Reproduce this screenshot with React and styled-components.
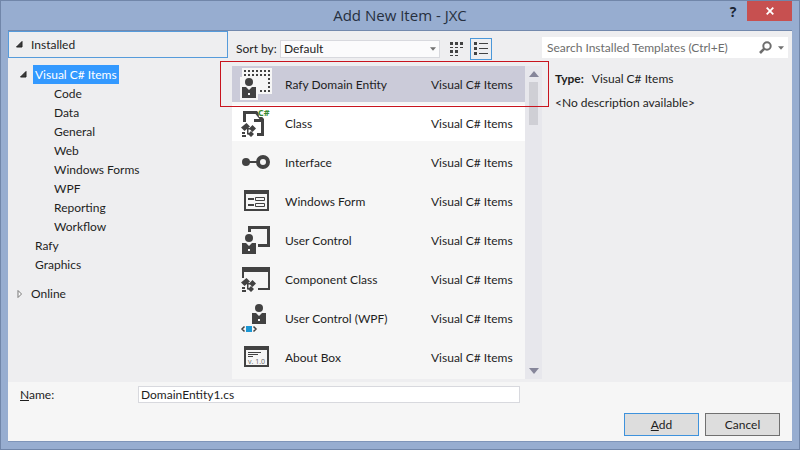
import React, { useState } from "react";
import styled, { createGlobalStyle } from "styled-components";

const INK = "#424242";

const GlobalStyle = createGlobalStyle`
  *, *::before, *::after { box-sizing: border-box; }
  body { margin: 0; }
  body, button, input, select {
    font-family: "Lato", "Open Sans", sans-serif;
    font-size: 12px;
    line-height: 19px;
    color: #1e1e1e;
  }
  ul { list-style: none; margin: 0; padding: 0; }
  svg { display: block; flex: none; }
`;

const Window = styled.div`
  display: flex;
  flex-direction: column;
  min-height: 100vh;
  padding: 0 7px 7px;
  background: #97add0;
  border: 1px solid #7186a9;
`;

const TitleBar = styled.header`
  display: grid;
  grid-template-columns: 80px 1fr 80px;
  align-items: start;
  height: 29px;
`;

const Title = styled.h1`
  grid-column: 2;
  margin: 0;
  font-family: "Open Sans", sans-serif;
  font-size: 15px;
  font-weight: 400;
  line-height: 29px;
  text-align: center;
  color: #26303f;
`;

const CaptionButtons = styled.div`
  display: flex;
  justify-content: flex-end;
`;

const CaptionButton = styled.button`
  display: grid;
  place-items: center;
  width: ${(p) => (p.$close ? 45 : 28)}px;
  height: 20px;
  padding: 0;
  border: 0;
  background: ${(p) => (p.$close ? "#c75050" : "transparent")};
  color: ${(p) => (p.$close ? "#fff" : "#1b2433")};
  font-family: "Open Sans", sans-serif;
  font-size: 14px;
  font-weight: 700;
`;

const Client = styled.main`
  display: flex;
  flex: 1;
  flex-direction: column;
  border-top: 1px solid #7389ad;
  border-bottom: 1px solid #7f95b9;
  background: #f6f6f6;
`;

const Browser = styled.div`
  display: grid;
  grid-template-columns: 220px minmax(0, 1fr) 250px;
  padding-bottom: 3px;
  background: #eeeef0;
`;

const Nav = styled.nav`
  display: flex;
  flex-direction: column;
`;

const NavHeader = styled.button`
  display: flex;
  align-items: center;
  gap: 8px;
  height: 27px;
  padding: 0 7px;
  border: 1px solid ${(p) => (p.$active ? "#569bdb" : "transparent")};
  background: transparent;
  text-align: left;
`;

const Tree = styled.ul`
  padding: 7px 0 6px 12px;
`;

const TreeRow = styled.li`
  display: flex;
  align-items: center;
  gap: 6px;
  height: 19px;
  padding-left: ${(p) => p.$indent}px;
`;

const TreeLabel = styled.button`
  height: 19px;
  padding: 0 2px;
  border: 0;
  background: ${(p) => (p.$selected ? "#3399ff" : "transparent")};
  color: ${(p) => (p.$selected ? "#fff" : "#1e1e1e")};
`;

const Templates = styled.section`
  padding-left: 4px;
`;

const SortBar = styled.div`
  display: flex;
  align-items: center;
  height: 35px;
  padding-left: 4px;
`;

const SortLabel = styled.label`
  width: 44px;
  white-space: nowrap;
`;

const SelectBox = styled.div`
  display: grid;
  align-items: center;
  width: 160px;
  margin-right: 6px;

  > * { grid-area: 1 / 1; }
  > svg { justify-self: end; margin-right: 4px; pointer-events: none; }
`;

const SortSelect = styled.select`
  appearance: none;
  width: 100%;
  height: 18px;
  padding: 0 3px;
  border: 1px solid #d8d9de;
  border-radius: 0;
  background: #fbfbfc;
  line-height: 16px;
`;

const ViewButton = styled.button`
  display: grid;
  place-items: center;
  width: 22px;
  height: 22px;
  margin-right: 2px;
  padding: 0;
  border: 1px solid ${(p) => (p.$active ? "#4a97d9" : "transparent")};
  background: transparent;
`;

const ListFrame = styled.div`
  position: relative;
  display: grid;
  grid-template-columns: minmax(0, 1fr) 17px;
`;

const Highlight = styled.div`
  position: absolute;
  top: -5px;
  right: -7px;
  left: -12px;
  height: 46px;
  border: 1px solid #c8141e;
  pointer-events: none;
`;

const TemplateList = styled.ul`
  display: grid;
  gap: 3px;
  padding-bottom: 4px;
  background: #f6f6f6;
`;

const TemplateButton = styled.button`
  display: flex;
  align-items: center;
  width: 100%;
  height: 36px;
  padding: 0 12px 0 8px;
  border: 0;
  text-align: left;
  background: ${(p) => (p.$selected ? "#cbcbd9" : p.$hovered ? "#fff" : "transparent")};
`;

const TemplateName = styled.span`
  flex: 1;
  padding-left: 13px;
`;

const TemplateKind = styled.span`
  width: 82px;
  white-space: nowrap;
`;

const ScrollBar = styled.div`
  display: flex;
  flex-direction: column;
  align-items: center;
  background: #e7e7ec;
`;

const ScrollButton = styled.button`
  display: grid;
  place-items: center;
  width: 17px;
  height: 16px;
  padding: 0;
  border: 0;
  background: transparent;
`;

const ScrollTrack = styled.div`
  flex: 1;
`;

const ScrollThumb = styled.div`
  width: 9px;
  height: 43px;
  background: #cfcfd5;
`;

const Details = styled.aside`
  padding: 6px 4px 0 0;
`;

const SearchBox = styled.div`
  display: flex;
  align-items: center;
  gap: 6px;
  height: 21px;
  padding: 0 4px 0 5px;
  background: #fff;
`;

const SearchInput = styled.input`
  flex: 1;
  min-width: 0;
  padding: 0;
  border: 0;
  outline: 0;
  background: transparent;

  &::placeholder { color: #6d6d6d; opacity: 1; }
`;

const Description = styled.div`
  display: grid;
  gap: 5px;
  padding: 11px 0 0 13px;
`;

const TypeLine = styled.div`
  display: flex;
  gap: 8px;
`;

const Footer = styled.form`
  display: flex;
  flex-direction: column;
  flex: 1;
  justify-content: space-between;
  padding: 3px 12px 5px;
`;

const NameRow = styled.div`
  display: flex;
  align-items: center;
`;

const NameLabel = styled.label`
  width: 118px;
`;

const NameInput = styled.input`
  flex: 0 1 382px;
  height: 17px;
  min-width: 0;
  padding: 0 2px;
  border: 1px solid #d8d9de;
  background: #fff;
`;

const Actions = styled.div`
  display: flex;
  justify-content: flex-end;
  gap: 6px;
`;

const ActionButton = styled.button`
  width: 75px;
  height: 23px;
  padding: 0;
  border: 1px solid ${(p) => (p.$primary ? "#3e92dc" : "#707070")};
  background: #dddddd;
`;

const Expanded = () => (
  <svg width="7" height="7" viewBox="0 0 7 7"><path d="M6 0.5V6H0.5z" fill="#3c3c3c" stroke="#222" /></svg>
);
const Collapsed = () => (
  <svg width="7" height="10" viewBox="0 0 7 10"><path d="M2 1.500v7L5.500 5z" fill="#fff" stroke="#777" /></svg>
);
const Down = ({ color = "#717171", size = 5 }) => (
  <svg width={size} height={size} viewBox="0 0 10 10"><path d="M0 2h10L5 8z" fill={color} /></svg>
);
const Up = () => (
  <svg width="10" height="10" viewBox="0 0 10 10"><path d="M0 8h10L5 2z" fill="#86869a" /></svg>
);
const Cross = () => (
  <svg width="8" height="8" viewBox="0 0 8 8"><path d="M0.7 0.7l6.6 6.6M7.3 0.7L0.7 7.3" stroke="#fff" strokeWidth="1.8" /></svg>
);
const Magnifier = () => (
  <svg width="13" height="13" viewBox="0 0 13 13" fill="none" stroke="#6d6d6d">
    <circle cx="8" cy="5" r="3.7" strokeWidth="2" />
    <path d="M5.3 7.7L1 12" strokeWidth="2.6" />
  </svg>
);
const SmallIcons = () => (
  <svg width="14" height="14" viewBox="0 0 14 14" fill={INK}>
    {[0, 5, 10].map((x) => <rect key={x} x={x} y="0" width="3" height="3" />)}
    {[0, 5, 10].map((x) => <rect key={x} x={x} y="5" width="3" height="1" />)}
    {[0, 5].map((x) => <rect key={x} x={x} y="8" width="3" height="3" />)}
    {[0, 5].map((x) => <rect key={x} x={x} y="13" width="3" height="1" />)}
  </svg>
);
const MediumIcons = () => (
  <svg width="14" height="14" viewBox="0 0 14 14" fill={INK}>
    {[0, 5, 10].map((y) => (
      <g key={y}><rect x="0" y={y} width="3" height="3" /><rect x="5" y={y + 1} width="9" height="1" /></g>
    ))}
  </svg>
);

const Person = ({ x = 0, y = 0, hole = "#f6f6f6" }) => (
  <g transform={`translate(${x} ${y})`}>
    <circle cx="7" cy="4" r="4" fill={INK} />
    <path d="M0 9h4l3 3 3-3h4v11H0z" fill={INK} />
    <rect x="6" y="15" width="2" height="2" fill={hole} />
  </g>
);
const Parts = ({ y = 0 }) => (
  <g transform={`translate(0 ${y})`} fill={INK}>
    <path d="M1 4.500L6.500 0l3.500 3.500L4.500 8z" />
    <path d="M9 5.500L12.500 2 16 5.500 12.500 9zM8 11l3-3 3 3-3 3z" />
    <path d="M7 5h3v1.500H8.500V10H10v1.500H7zM2 9h3v2H2zM2 12h4v2H2z" />
  </g>
);

const dots = [];
for (let x = 4; x <= 28; x += 4) dots.push([x, 2], [x, 6]);
for (let y = 10; y <= 18; y += 4) dots.push([28, y]);
for (let x = 20; x <= 28; x += 4) dots.push([x, 22]);

const glyphs = {
  entity: (
    <>
      <path d="M2 0h30v26H18v6H0V9h2z" fill="#f6f6f6" />
      {dots.map(([x, y]) => <rect key={`${x}-${y}`} x={x} y={y} width="2" height="2" fill={INK} />)}
      <Person x={2} y={10} />
    </>
  ),
  class: (
    <>
      <path d="M3 15V4h14l7 8v17h-7v-3h4V15h-7V7H6v8z" fill={INK} />
      <path d="M14 7h1.500l4 5H14z" fill="#fff" />
      <Parts y={16} />
      <path d="M18 1h13v9H19z" fill="#fff" />
      <text x="18" y="9" fontFamily="Open Sans, sans-serif" fontSize="9" fontWeight="700" fill="#388a34">C#</text>
    </>
  ),
  interface: (
    <>
      <circle cx="6" cy="16" r="4" fill={INK} />
      <path d="M6 16h11" stroke={INK} strokeWidth="2" />
      <circle cx="23" cy="16" r="5" fill="none" stroke={INK} strokeWidth="4" />
    </>
  ),
  form: (
    <>
      <path d="M4 5h25v21H4z M6 9v15h21V9z" fill={INK} fillRule="evenodd" />
      <path d="M8 13h6v2H8zM8 19h6v2H8z" fill={INK} />
      <path d="M15.500 12.500h9v3h-9zM15.500 18.500h9v3h-9z" fill="none" stroke={INK} />
    </>
  ),
  control: (
    <>
      <path d="M9.500 8V3.500h19v18H18" fill="none" stroke={INK} strokeWidth="3" />
      <Person x={2} y={10} />
    </>
  ),
  component: (
    <>
      <path d="M2 4h28v23H18v-2h10V9H4v6H2z" fill={INK} />
      <Parts y={15} />
    </>
  ),
  wpf: (
    <>
      <Person x={12} y={2} />
      <rect x="6" y="24" width="6" height="6" fill="#1c97d4" />
      <path d="M4.500 24.500L2 27l2.500 2.500M13.500 24.500L16 27l-2.500 2.500" fill="none" stroke={INK} strokeWidth="1.5" />
    </>
  ),
  about: (
    <>
      <path d="M4 5h25v21H4z M6 9v15h21V9z" fill={INK} fillRule="evenodd" />
      <path d="M8 11.500h13M8 13.500h10M8 15.500h5" stroke={INK} />
      <text x="8" y="23" fontFamily="Open Sans, sans-serif" fontSize="7" fill="#666">v. 1.0</text>
    </>
  ),
};

const TemplateIcon = ({ name }) => (
  <svg width="32" height="32" viewBox="0 0 32 32" aria-hidden="true">{glyphs[name]}</svg>
);

const categories = ["Code", "Data", "General", "Web", "Windows Forms", "WPF", "Reporting", "Workflow"];
const templates = [
  ["entity", "Rafy Domain Entity"],
  ["class", "Class"],
  ["interface", "Interface"],
  ["form", "Windows Form"],
  ["control", "User Control"],
  ["component", "Component Class"],
  ["wpf", "User Control (WPF)"],
  ["about", "About Box"],
];

export default function App() {
  const [selected, setSelected] = useState("entity");
  const [fileName, setFileName] = useState("DomainEntity1.cs");

  return (
    <>
      <GlobalStyle />
      <Window>
        <TitleBar>
          <Title>Add New Item - JXC</Title>
          <CaptionButtons>
            <CaptionButton type="button" aria-label="Help">?</CaptionButton>
            <CaptionButton type="button" aria-label="Close" $close><Cross /></CaptionButton>
          </CaptionButtons>
        </TitleBar>
        <Client>
          <Browser>
            <Nav aria-label="Template categories">
              <NavHeader type="button" $active><Expanded />Installed</NavHeader>
              <Tree>
                <TreeRow $indent={0}>
                  <Expanded />
                  <TreeLabel type="button" $selected>Visual C# Items</TreeLabel>
                </TreeRow>
                {categories.map((c) => (
                  <TreeRow key={c} $indent={32}><TreeLabel type="button">{c}</TreeLabel></TreeRow>
                ))}
                <TreeRow $indent={13}><TreeLabel type="button">Rafy</TreeLabel></TreeRow>
                <TreeRow $indent={13}><TreeLabel type="button">Graphics</TreeLabel></TreeRow>
              </Tree>
              <NavHeader type="button"><Collapsed />Online</NavHeader>
            </Nav>

            <Templates>
              <SortBar>
                <SortLabel htmlFor="sort">Sort by:</SortLabel>
                <SelectBox>
                  <SortSelect id="sort" defaultValue="Default"><option>Default</option></SortSelect>
                  <Down size={6} />
                </SelectBox>
                <ViewButton type="button" aria-label="Small icons"><SmallIcons /></ViewButton>
                <ViewButton type="button" aria-label="Medium icons" $active><MediumIcons /></ViewButton>
              </SortBar>
              <ListFrame>
                <TemplateList>
                  {templates.map(([id, name]) => (
                    <li key={id}>
                      <TemplateButton
                        type="button"
                        $selected={selected === id}
                        $hovered={id === "class"}
                        onClick={() => setSelected(id)}
                      >
                        <TemplateIcon name={id} />
                        <TemplateName>{name}</TemplateName>
                        <TemplateKind>Visual C# Items</TemplateKind>
                      </TemplateButton>
                    </li>
                  ))}
                </TemplateList>
                <ScrollBar>
                  <ScrollButton type="button" aria-label="Scroll up"><Up /></ScrollButton>
                  <ScrollTrack><ScrollThumb /></ScrollTrack>
                  <ScrollButton type="button" aria-label="Scroll down"><Down color="#86869a" size={10} /></ScrollButton>
                </ScrollBar>
                <Highlight />
              </ListFrame>
            </Templates>

            <Details>
              <SearchBox>
                <SearchInput aria-label="Search templates" placeholder="Search Installed Templates (Ctrl+E)" />
                <Magnifier />
                <Down size={6} />
              </SearchBox>
              <Description>
                <TypeLine><strong>Type:</strong><span>Visual C# Items</span></TypeLine>
                <span>&lt;No description available&gt;</span>
              </Description>
            </Details>
          </Browser>

          <Footer onSubmit={(e) => e.preventDefault()}>
            <NameRow>
              <NameLabel htmlFor="name"><u>N</u>ame:</NameLabel>
              <NameInput id="name" value={fileName} onChange={(e) => setFileName(e.target.value)} />
            </NameRow>
            <Actions>
              <ActionButton type="submit" $primary><u>A</u>dd</ActionButton>
              <ActionButton type="button">Cancel</ActionButton>
            </Actions>
          </Footer>
        </Client>
      </Window>
    </>
  );
}
